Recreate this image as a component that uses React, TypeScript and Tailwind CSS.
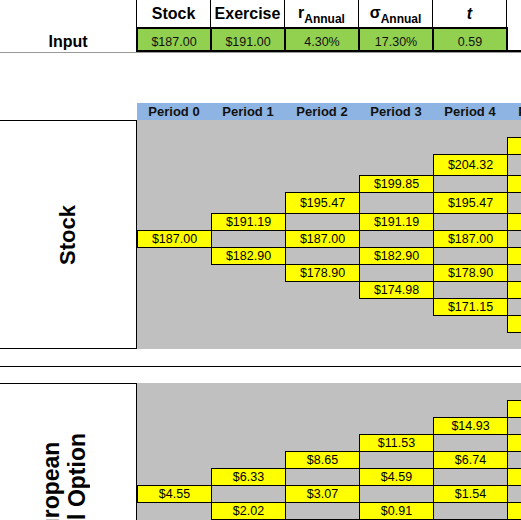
import React from "react";

const stockCols: string[][] = [
  ["$187.00"],
  ["$191.19", "$182.90"],
  ["$195.47", "$187.00", "$178.90"],
  ["$199.85", "$191.19", "$182.90", "$174.98"],
  ["$204.32", "$195.47", "$187.00", "$178.90", "$171.15"],
  ["$208.89", "$199.85", "$191.19", "$182.90", "$174.98", "$167.40"],
];

const optionCols: string[][] = [
  ["$4.55"],
  ["$6.33", "$2.02"],
  ["$8.65", "$3.07", "$0.34"],
  ["$11.53", "$4.59", "$0.91", "$0.00"],
  ["$14.93", "$6.74", "$1.54", "$0.00", "$0.00"],
  ["$18.97", "$9.85", "$2.51", "$0.00", "$0.00", "$0.00"],
];

function Tree({ cols, rowsClass }: { cols: string[][]; rowsClass: string }) {
  return (
    <div className={`grid shrink-0 w-[444px] bg-[#c0c0c0] grid-cols-[repeat(6,74px)] ${rowsClass}`}>
      {cols.map((col, k) =>
        col.map((v, j) => (
          <div
            key={`${k}-${j}`}
            style={{ gridColumn: k + 1, gridRow: 7 - k + 2 * j }}
            className="w-[75px] h-[calc(100%+1px)] self-start bg-[#ffff00] border border-black flex items-center justify-center text-[12.5px] leading-[14px] text-black"
          >
            {v}
          </div>
        ))
      )}
    </div>
  );
}

export default function App() {
  const periods = ["Period 0", "Period 1", "Period 2", "Period 3", "Period 4", "Period 5"];
  return (
    <div className="w-[521px] h-[520px] overflow-hidden bg-white font-['Liberation_Sans',Arial,sans-serif] text-black">
      {/* Header row */}
      <div className="flex h-[27px] w-[600px]">
        <div className="w-[137px] shrink-0 border-r border-black" />
        {["Stock", "Exercise"].map((h) => (
          <div key={h} className="w-[74px] shrink-0 border-r border-black flex items-end justify-center pb-px text-[16px] font-bold leading-normal">
            {h}
          </div>
        ))}
        <div className="w-[74px] shrink-0 border-r border-black flex items-end justify-center pb-[2px] text-[16px] font-bold leading-normal">
          <span>r</span>
          <span className="text-[12px] relative top-[3px] leading-normal">Annual</span>
        </div>
        <div className="w-[74px] shrink-0 border-r border-black flex items-end justify-center pb-[2px] text-[16px] font-bold leading-normal">
          <span>σ</span>
          <span className="text-[12px] relative top-[3px] leading-normal">Annual</span>
        </div>
        <div className="w-[74px] shrink-0 border-r border-black flex items-end justify-center pb-px text-[16px] font-bold italic leading-normal">
          t
        </div>
        <div className="flex-1" />
      </div>

      {/* Input row */}
      <div className="flex h-[25px] w-[600px]">
        <div className="w-[136px] shrink-0 flex items-end justify-center pb-[2px] text-[16px] font-bold leading-[17px]">
          Input
        </div>
        <div className="w-[76px] shrink-0 bg-[#92d050] border-2 border-black flex items-end justify-center pb-px text-[12.5px] leading-[14px] text-[#111]">
          $187.00
        </div>
        {["$191.00", "4.30%", "17.30%", "0.59"].map((v) => (
          <div key={v} className="w-[74px] shrink-0 bg-[#92d050] border-y-2 border-r-2 border-black flex items-end justify-center pb-px text-[12.5px] leading-[14px] text-[#111]">
            {v}
          </div>
        ))}
        <div className="flex-1 border-b-2 border-black" />
      </div>
      <div className="h-px bg-[#9a9a9a]" />

      <div className="h-[50px]" />

      {/* Period header */}
      <div className="flex h-[17px] w-[600px]">
        <div className="w-[137px] shrink-0" />
        <div className="flex bg-[#8db4e2] flex-1">
          {periods.map((p) => (
            <div key={p} className="w-[74px] shrink-0 flex items-center justify-center text-[13px] font-bold leading-[15px] text-[#111]">
              {p}
            </div>
          ))}
        </div>
      </div>

      {/* Stock tree */}
      <div className="flex h-[229px] w-[600px]">
        <div className="w-[137px] shrink-0 border-t border-r border-b border-black flex items-center justify-center">
          <div className="[writing-mode:vertical-rl] rotate-180 text-[22px] font-bold leading-normal mr-[2px]">Stock</div>
        </div>
        <Tree cols={stockCols} rowsClass="grid-rows-[17px_17px_21px_17px_21px_17px_17px_17px_17px_17px_17px_17px_17px]" />
      </div>

      <div className="h-[17px]" />
      <div className="h-px bg-black" />
      <div className="h-[16px]" />

      {/* Option tree */}
      <div className="flex h-[221px] w-[600px]">
        <div className="w-[137px] shrink-0 border-t border-r border-black flex items-center justify-center">
          <div className="[writing-mode:vertical-rl] rotate-180 text-[23px] font-bold leading-[26px] text-center mr-[8px]">
            European
            <br />
            Call Option
          </div>
        </div>
        <Tree cols={optionCols} rowsClass="grid-rows-[repeat(13,17px)]" />
      </div>
    </div>
  );
}
